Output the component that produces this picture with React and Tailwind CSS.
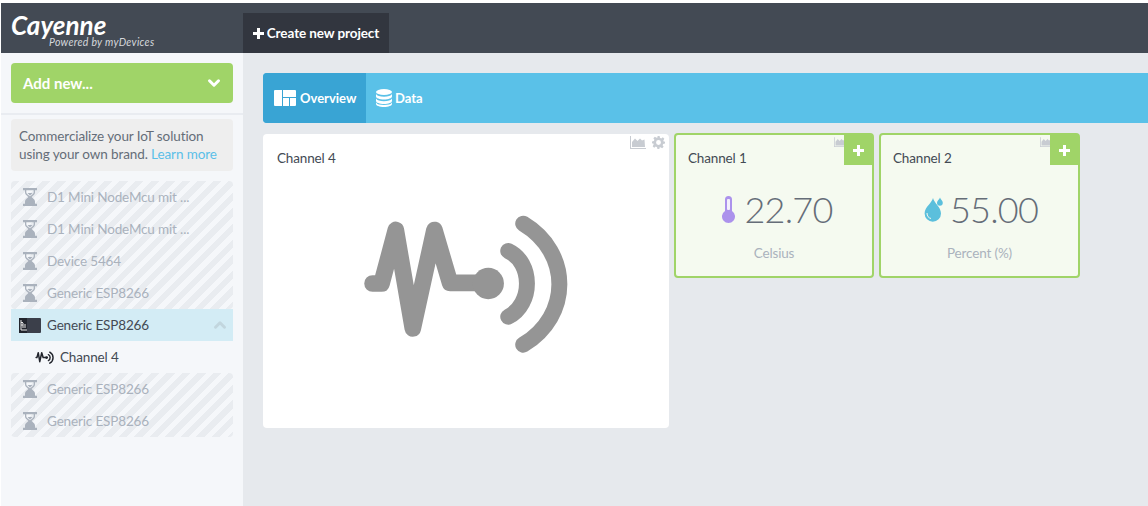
import { ChevronDown, ChevronUp } from 'lucide-react'

const FONT = { fontFamily: '"Lato", "Noto Sans", sans-serif' }

function Hourglass() {
  return (
    <svg viewBox="0 0 14 18" className="w-[14px] h-[18px] shrink-0 text-[#aab2bd]" fill="currentColor">
      <path d="M0 0h14v2.2H0zM0 15.8h14V18H0z" />
      <path d="M2 2v2.5c0 2 2.2 3.3 3.4 4.5C4.200 10.200 2 11.500 2 13.500V16h10v-2.500c0-2-2.200-3.300-3.400-4.500C9.800 7.800 12 6.500 12 4.500V2h-1.300v2.500c0 1.500-2.300 2.800-3.700 3.800-1.400-1-3.700-2.300-3.700-3.800V2z" />
      <path d="M4.500 5h5L7 7.500zM7 11l3 3.800H4z" />
    </svg>
  )
}

function DeviceIcon() {
  return (
    <svg viewBox="0 0 22 15" className="w-[22px] h-[15px] shrink-0">
      <rect width="22" height="15" rx="1" fill="#3b3f4a" />
      <rect x="0" width="8" height="15" fill="#22252d" />
      <path d="M2 2v10h6M4 5v5M2 4.500h2M2 7h2M6 6v4" stroke="#e8e8e8" strokeWidth="1" fill="none" />
    </svg>
  )
}

function WaveIcon({ className, color }) {
  return (
    <svg viewBox="60 60 630 430" className={className} fill="none" stroke={color}>
      <path d="M97 278 L124 278 L167 117 L218 413 L283 117 L330 276 L445 276" strokeWidth="50" strokeLinecap="round" strokeLinejoin="round" />
      <circle cx="445" cy="278" r="47" fill={color} stroke="none" />
      <path d="M505 180 C580 215 580 340 505 378" strokeWidth="48" strokeLinecap="round" />
      <path d="M550 98 C695 185 695 375 550 462" strokeWidth="48" strokeLinecap="round" />
    </svg>
  )
}

function PlusIcon({ className }) {
  return (
    <svg viewBox="0 0 11 11" className={className} fill="currentColor">
      <path d="M4 0h3v4h4v3H7v4H4V7H0V4h4z" />
    </svg>
  )
}

function AreaIcon({ className }) {
  return (
    <svg viewBox="0 0 16 13" className={className} fill="currentColor">
      <path d="M0 0h1v12h15v1H0z" />
      <path d="M2 11V6l3-3.500L7.500 5 10 2.500l2 2 2.500-1L15 11z" />
    </svg>
  )
}

function GearIcon() {
  return (
    <svg viewBox="0 0 24 24" className="w-[13px] h-[13px] text-[#c8ccd2]" fill="currentColor">
      <path fillRule="evenodd" d="M10 0h4l.7 3.400 2.300 1 3-1.900 2.800 2.800-1.900 3 1 2.300L24 10v4l-3.400.7-1 2.300 1.900 3-2.800 2.800-3-1.900-2.300 1L14 24h-4l-.7-3.400-2.300-1-3 1.900-2.800-2.800 1.900-3-1-2.300L0 14v-4l3.400-.7 1-2.300-1.900-3L5.300 1.200l3 1.900 2.300-1zM12 7.500a4.500 4.500 0 1 0 0 9 4.500 4.500 0 0 0 0-9z" />
    </svg>
  )
}

function Thermometer() {
  return (
    <svg viewBox="0 0 13 27" className="w-[13px] h-[27px] shrink-0">
      <path d="M3 3.500a3.500 3.500 0 0 1 7 0V15a6.500 6.500 0 1 1-7 0z" fill="#ac92ec" />
      <rect x="5" y="3" width="3" height="11" rx="1" fill="#f3f0fc" />
    </svg>
  )
}

function Drops() {
  return (
    <svg viewBox="0 0 19 25" className="w-[19px] h-[25px] shrink-0" fill="#5bbfdc">
      <path d="M9 1C10 6 17 10 17 16.500A8.200 8.200 0 0 1 .6 16.500C.6 10 8 6 9 1z" />
      <path d="M16 .5c.4 1.700 2.800 3.200 2.800 5.300a2.900 2.900 0 0 1-5.800 0c0-2.100 2.600-3.600 3-5.300z" />
      <path d="M3 16c0 3 1.500 5 4 5.500" stroke="#f4faee" strokeWidth="1" fill="none" />
    </svg>
  )
}

function PendingRows({ names }) {
  return (
    <div className="ml-[11px] mr-[10px] rounded-sm bg-[repeating-linear-gradient(135deg,#e9ecf0_0px,#e9ecf0_6px,#f5f7fa_6px,#f5f7fa_11px)]">
      {names.map((name, i) => (
        <div key={i} className="h-8 flex items-center pl-[12px] gap-[10px] text-[13.5px] tracking-[-0.15px] text-[#aab2bd]">
          <Hourglass />
          <span>{name}</span>
        </div>
      ))}
    </div>
  )
}

function SensorCard({ title, value, unit, icon, valueRow, width }) {
  return (
    <div className={`relative h-[145px] rounded-sm border-2 border-[#a0d468] bg-[#f5faf0] flex flex-col ${width}`}>
      <AreaIcon className="absolute top-[1px] right-[26px] w-[12px] h-[12px] text-[#c8ccd2]" />
      <div className="absolute top-0 right-0 w-[28px] h-[30px] pl-px bg-[#a0d468] flex items-center justify-center text-white">
        <PlusIcon className="w-[11px] h-[11px]" />
      </div>
      <div className="pl-[12px] pt-[14px] text-[13.5px] tracking-[-0.15px] leading-[18px] text-[#434a54]">{title}</div>
      <div className={`mt-[22px] flex items-center justify-center ${valueRow}`}>
        {icon}
        <span className="text-[36px] leading-[40px] font-light text-[#656d78] tracking-[-0.8px]">{value}</span>
      </div>
      <div className="mt-[15px] text-center text-[13.5px] tracking-[-0.15px] leading-[18px] text-[#aab2bd]">{unit}</div>
    </div>
  )
}

export default function App() {
  return (
    <div style={FONT} className="w-[1148px] h-[506px] overflow-hidden bg-white pt-[3px] pl-px flex flex-col">
      {/* top bar */}
      <div className="h-[50px] shrink-0 bg-[#434a54] flex">
        <div className="w-[242px] pl-[10px] pt-[10px] text-white italic leading-none">
          <div className="text-[26px] font-bold leading-[24px]">Cayenne</div>
          <div className="ml-[38px] text-[10.5px] leading-[10px] text-[#d5d8dc] tracking-[0.3px]">Powered by myDevices</div>
        </div>
        <div className="mt-[10px] h-[40px] w-[146px] bg-[#32363f] flex items-center justify-center gap-[3px] text-white text-[13.5px] tracking-[-0.1px] font-bold">
          <PlusIcon className="w-[11px] h-[11px]" />
          <span>Create new project</span>
        </div>
      </div>

      <div className="flex flex-1 min-h-0">
        {/* sidebar */}
        <div className="w-[242px] shrink-0 bg-[#f5f7fa]">
          <div className="px-[10px] pt-[10px] pb-[10px] border-b-2 border-[#e9ecf1] -mb-px">
            <div className="h-[40px] rounded-sm bg-[#a0d468] flex items-center justify-between pl-[12px] pr-[10px] text-white text-[15px] font-bold">
              <span>Add new...</span>
              <ChevronDown size={18} strokeWidth={4} />
            </div>
          </div>
          <div className="mx-[10px] mt-[5px] h-[52px] rounded-sm bg-[#eeeeee] px-[8px] py-[8px] text-[13.5px] tracking-[-0.1px] leading-[18px] text-[#656d78] whitespace-nowrap">
            Commercialize your IoT solution<br />
            using your own brand. <span className="text-[#5bbfe8]">Learn more</span>
          </div>
          <div className="mt-[10px] -ml-px">
            <PendingRows names={['D1 Mini NodeMcu mit ...', 'D1 Mini NodeMcu mit ...', 'Device 5464', 'Generic ESP8266']} />
            <div className="ml-[11px] mr-[10px] h-8 bg-[#d3ecf5] flex items-center pl-[8px] gap-[6px] text-[13.5px] tracking-[-0.15px] text-[#434a54]">
              <DeviceIcon />
              <span className="flex-1">Generic ESP8266</span>
              <ChevronUp size={18} strokeWidth={4} className="mr-[4px] text-[#c2d6de]" />
            </div>
            <div className="ml-[11px] mr-[10px] h-8 flex items-center pl-[24px] gap-[6px] text-[13.5px] tracking-[-0.15px] text-[#434a54]">
              <WaveIcon className="w-[19px] h-[13px]" color="#22252d" />
              <span>Channel 4</span>
            </div>
            <PendingRows names={['Generic ESP8266', 'Generic ESP8266']} />
          </div>
        </div>

        {/* main */}
        <div className="flex-1 bg-[#e6e9ed] pl-[20px] pt-[20px]">
          <div className="h-[50px] w-[1000px] rounded-l-sm bg-[#5ac1e8] flex text-white text-[13px] font-bold">
            <div className="w-[103px] rounded-l-sm bg-[#39a4d4] flex items-center pl-[11px] gap-[4px]">
              <svg viewBox="0 0 22 16" className="w-[22px] h-[16px]" fill="currentColor">
                <path d="M0 1a1 1 0 0 1 1-1h7v16H1a1 1 0 0 1-1-1zM9 0h12a1 1 0 0 1 1 1v6H9zM9 8h6v8H9zM16 8h6v7a1 1 0 0 1-1 1h-5z" />
              </svg>
              <span className="pt-px">Overview</span>
            </div>
            <div className="flex items-center pl-[10px] gap-[3px]">
              <svg viewBox="0 0 16 18" className="w-[16px] h-[18px]" fill="currentColor">
                <ellipse cx="8" cy="3" rx="8" ry="3" />
                <path d="M0 5c1 2 4 2.700 8 2.700S15 7 16 5v2.500c0 1.600-3.600 3-8 3s-8-1.400-8-3zM0 9.500c1 2 4 2.700 8 2.700s7-.7 8-2.700V12c0 1.600-3.600 3-8 3s-8-1.400-8-3zM0 13.500c1 1.800 4 2.500 8 2.500s7-.7 8-2.500V15c0 1.600-3.600 3-8 3s-8-1.400-8-3z" />
              </svg>
              <span className="pt-px">Data</span>
            </div>
          </div>

          <div className="mt-[10px] flex items-start gap-[5px]">
            <div className="relative mt-px w-[406px] h-[294px] rounded-sm bg-white flex flex-col">
              <div className="absolute top-[2px] right-[4px] flex items-center gap-[6px]">
                <AreaIcon className="w-[16px] h-[13px] text-[#c8ccd2]" />
                <GearIcon />
              </div>
              <div className="pl-[14px] pt-[15px] text-[13.5px] tracking-[-0.15px] leading-[18px] text-[#434a54]">Channel 4</div>
              <div className="flex-1 flex items-center justify-center pb-[31px] pr-[3px]">
                <WaveIcon className="w-[210px] h-[143px]" color="#959595" />
              </div>
            </div>
            <SensorCard title="Channel 1" value="22.70" unit="Celsius" icon={<Thermometer />} valueRow="gap-[10px] pl-[6px]" width="w-[200px]" />
            <SensorCard title="Channel 2" value="55.00" unit="Percent (%)" icon={<Drops />} valueRow="gap-[7px] pl-[3px]" width="w-[201px]" />
          </div>
        </div>
      </div>
    </div>
  )
}
